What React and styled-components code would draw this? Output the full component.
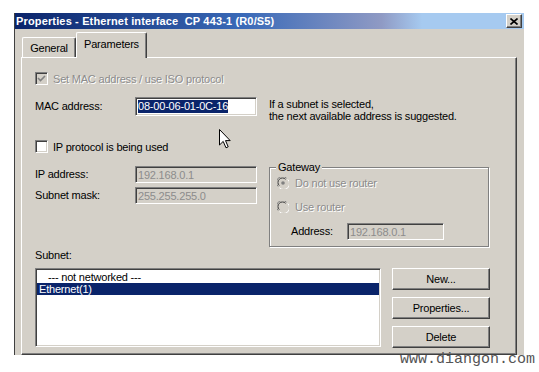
import React from "react";
import styled, { createGlobalStyle } from "styled-components";

const GlobalStyle = createGlobalStyle`
  html, body {
    margin: 0;
    padding: 0;
    background: #fff;
  }
  body {
    font-family: "Liberation Sans", Arial, sans-serif;
    font-size: 11px;
    letter-spacing: -0.2px;
    color: #000;
  }
`;

const Page = styled.div`
  position: relative;
  width: 539px;
  height: 372px;
  padding: 13px 0 0 14px;
  box-sizing: border-box;
  overflow: hidden;
`;

const Window = styled.div`
  width: 510px;
  height: 342px;
  box-sizing: border-box;
  background: #d4d0c8;
  border-left: 1px solid #404040;
  display: flex;
  flex-direction: column;
`;

const TitleBar = styled.div`
  height: 16px;
  flex-shrink: 0;
  display: flex;
  align-items: center;
  justify-content: space-between;
  padding: 0 2px 0 1px;
  background: linear-gradient(90deg, #0a246a 0%, #3a6ab8 45%, #8f9ac4 72%, #a6caf0 80%, #a6caf0 100%);
  color: #fff;
  font-weight: bold;
  font-size: 11px;
  letter-spacing: 0.15px;
  white-space: pre;
`;

const CloseButton = styled.div`
  width: 16px;
  height: 14px;
  box-sizing: border-box;
  background: #d4d0c8;
  border: 1px solid;
  border-color: #fff #404040 #404040 #fff;
  box-shadow: inset -1px -1px #808080;
  display: flex;
  align-items: center;
  justify-content: center;
`;

const Body = styled.div`
  flex: 1;
  display: flex;
  flex-direction: column;
  padding: 0 7px 0 6px;
`;

const TabStrip = styled.div`
  height: 28px;
  flex-shrink: 0;
  display: flex;
  align-items: flex-end;
  padding-left: 1px;
`;

const Tab = styled.div`
  position: relative;
  z-index: 1;
  width: ${(p) => p.width}px;
  height: ${(p) => (p.active ? 26 : 20)}px;
  margin-bottom: ${(p) => (p.active ? -1 : 0)}px;
  box-sizing: border-box;
  background: #d4d0c8;
  border: 1px solid;
  border-bottom: none;
  border-color: #fff #404040 #404040 #fff;
  border-radius: 2px 2px 0 0;
  box-shadow: inset -1px 0 #808080;
  display: flex;
  align-items: center;
  justify-content: center;
  padding-bottom: ${(p) => (p.active ? 4 : 0)}px;
`;

const Panel = styled.div`
  flex: 1;
  box-sizing: border-box;
  border: 1px solid;
  border-color: #fff #404040 #404040 #fff;
  box-shadow: inset -1px -1px #808080;
  padding: 14px 0 0 13px;
  display: flex;
  flex-direction: column;
`;

const CheckRow = styled.div`
  display: flex;
  align-items: center;
  gap: 5px;
  height: 13px;
  margin-top: ${(p) => p.top || 0}px;
  color: ${(p) => (p.disabled ? "#8c8c8c" : "#000")};
  text-shadow: ${(p) => (p.disabled ? "1px 1px 0 #fff" : "none")};
`;

const CheckBox = styled.span`
  width: 13px;
  height: 13px;
  box-sizing: border-box;
  flex-shrink: 0;
  background: ${(p) => (p.disabled ? "#d4d0c8" : "#fff")};
  border: 1px solid;
  border-color: #808080 #fff #fff #808080;
  box-shadow: inset 1px 1px #404040, inset -1px -1px #d4d0c8;
  display: flex;
  align-items: center;
  justify-content: center;
`;

const FieldRow = styled.div`
  display: flex;
  align-items: flex-start;
  margin-top: ${(p) => p.top || 0}px;
`;

const Label = styled.span`
  width: ${(p) => p.width}px;
  margin-left: ${(p) => p.indent || 0}px;
  flex-shrink: 0;
  line-height: ${(p) => p.h}px;
`;

const Input = styled.div`
  width: ${(p) => p.width}px;
  height: ${(p) => p.h}px;
  box-sizing: border-box;
  flex-shrink: 0;
  background: ${(p) => (p.disabled ? "#d4d0c8" : "#fff")};
  color: ${(p) => (p.disabled ? "#8c8c8c" : "#000")};
  border: 1px solid;
  border-color: #808080 #fff #fff #808080;
  box-shadow: inset 1px 1px #404040, inset -1px -1px #d4d0c8;
  padding-left: 2px;
  display: flex;
  align-items: center;
  white-space: nowrap;
`;

const Selected = styled.span`
  background: #0a246a;
  color: #fff;
  line-height: 13px;
`;

const Hint = styled.div`
  margin: 1px 0 0 12px;
  line-height: 12px;
`;

const IpSection = styled.div`
  display: flex;
  margin-top: 8px;
`;

const AddressColumn = styled.div`
  display: flex;
  flex-direction: column;
  gap: 4px;
  margin-top: 5px;
  width: 222px;
`;

const GroupBox = styled.div`
  position: relative;
  width: 220px;
  height: 80px;
  margin: 6px 0 0 12px;
  box-sizing: border-box;
  border: 1px solid #808080;
  box-shadow: inset 1px 1px #fff, 1px 1px #fff;
  padding: 9px 0 0 7px;
  display: flex;
  flex-direction: column;
`;

const Legend = styled.span`
  position: absolute;
  top: -7px;
  left: 6px;
  padding: 0 2px;
  background: #d4d0c8;
  line-height: 13px;
`;

const RadioRow = styled.div`
  display: flex;
  align-items: center;
  gap: 6px;
  height: 12px;
  margin-top: ${(p) => p.top || 0}px;
  color: #8c8c8c;
  text-shadow: 1px 1px 0 #fff;
`;

const SubnetLabel = styled.div`
  margin-top: 2px;
  line-height: 13px;
`;

const SubnetRow = styled.div`
  display: flex;
  align-items: flex-start;
  margin-top: 6px;
`;

const ListBox = styled.div`
  width: 346px;
  height: 79px;
  box-sizing: border-box;
  background: #fff;
  border: 1px solid;
  border-color: #808080 #fff #fff #808080;
  box-shadow: inset 1px 1px #404040, inset -1px -1px #d4d0c8;
  padding: 2px 1px;
  display: flex;
  flex-direction: column;
`;

const ListItem = styled.div`
  height: 12px;
  line-height: 12px;
  padding-left: ${(p) => p.indent}px;
  background: ${(p) => (p.selected ? "#0a246a" : "transparent")};
  color: ${(p) => (p.selected ? "#fff" : "#000")};
  white-space: nowrap;
`;

const ButtonColumn = styled.div`
  display: flex;
  flex-direction: column;
  gap: 7px;
  margin-left: 11px;
`;

const Button = styled.div`
  width: 98px;
  height: 22px;
  box-sizing: border-box;
  background: #d4d0c8;
  border: 1px solid;
  border-color: #fff #404040 #404040 #fff;
  box-shadow: inset -1px -1px #808080;
  display: flex;
  align-items: center;
  justify-content: center;
`;

const Cursor = styled.svg`
  position: absolute;
  left: 219px;
  top: 129px;
`;

const Watermark = styled.div`
  position: absolute;
  left: 400px;
  top: 352px;
  font-family: "Liberation Mono", "Courier New", monospace;
  font-size: 15px;
  line-height: 16px;
  letter-spacing: 0;
  color: #555;
`;

const Check = ({ color }) => (
  <svg width="9" height="9" viewBox="0 0 9 9">
    <polyline points="1,4 3.5,6.5 8,2" fill="none" stroke={color} strokeWidth="1.6" />
  </svg>
);

const Radio = ({ dot }) => (
  <svg width="12" height="12" viewBox="0 0 12 12">
    <circle cx="6" cy="6" r="5.5" fill="#d4d0c8" />
    <path d="M1.2 9.5 A5.5 5.5 0 0 1 9.5 1.2" fill="none" stroke="#808080" strokeWidth="1" />
    <path d="M2.3 8.6 A4.3 4.3 0 0 1 8.6 2.3" fill="none" stroke="#404040" strokeWidth="1" />
    <path d="M10.8 2.5 A5.5 5.5 0 0 1 2.5 10.8" fill="none" stroke="#fff" strokeWidth="1" />
    {dot && <circle cx="6" cy="6" r="1.8" fill="#808080" />}
  </svg>
);

export default function App() {
  return (
    <Page>
      <GlobalStyle />
      <Window>
        <TitleBar>
          <span>{"Properties - Ethernet interface  CP 443-1 (R0/S5)"}</span>
          <CloseButton>
            <svg width="8" height="7" viewBox="0 0 8 7">
              <path d="M0.5 0.5 L7.5 6.5 M7.5 0.5 L0.5 6.5" stroke="#000" strokeWidth="1.6" />
            </svg>
          </CloseButton>
        </TitleBar>
        <Body>
          <TabStrip>
            <Tab width={54}>General</Tab>
            <Tab width={71} active>Parameters</Tab>
          </TabStrip>
          <Panel>
            <CheckRow disabled>
              <CheckBox disabled>
                <Check color="#808080" />
              </CheckBox>
              Set MAC address / use ISO protocol
            </CheckRow>

            <FieldRow top={12}>
              <Label width={100} h={19}>MAC address:</Label>
              <Input width={122} h={19}>
                <Selected>08-00-06-01-0C-16</Selected>
              </Input>
              <Hint>
                If a subnet is selected,
                <br />
                the next available address is suggested.
              </Hint>
            </FieldRow>

            <CheckRow top={18}>
              <CheckBox />
              IP protocol is being used
            </CheckRow>

            <IpSection>
              <AddressColumn>
                <FieldRow>
                  <Label width={100} h={17}>IP address:</Label>
                  <Input width={122} h={17} disabled>192.168.0.1</Input>
                </FieldRow>
                <FieldRow>
                  <Label width={100} h={17}>Subnet mask:</Label>
                  <Input width={122} h={17} disabled>255.255.255.0</Input>
                </FieldRow>
              </AddressColumn>
              <GroupBox>
                <Legend>Gateway</Legend>
                <RadioRow>
                  <Radio dot />
                  Do not use router
                </RadioRow>
                <RadioRow top={12}>
                  <Radio />
                  Use router
                </RadioRow>
                <FieldRow top={10}>
                  <Label width={56} h={17} indent={14}>Address:</Label>
                  <Input width={97} h={17} disabled>192.168.0.1</Input>
                </FieldRow>
              </GroupBox>
            </IpSection>

            <SubnetLabel>Subnet:</SubnetLabel>
            <SubnetRow>
              <ListBox>
                <ListItem indent={11}>--- not networked ---</ListItem>
                <ListItem indent={2} selected>Ethernet(1)</ListItem>
              </ListBox>
              <ButtonColumn>
                <Button>New...</Button>
                <Button>Properties...</Button>
                <Button>Delete</Button>
              </ButtonColumn>
            </SubnetRow>
          </Panel>
        </Body>
      </Window>
      <Cursor width="13" height="20" viewBox="0 0 13 20">
        <path d="M0.5 0.5 L0.5 16 L4.2 12.4 L7 18.8 L9.2 17.8 L6.5 11.6 L11.2 11.6 Z" fill="#fff" stroke="#000" strokeWidth="1" />
      </Cursor>
      <Watermark>www.diangon.com</Watermark>
    </Page>
  );
}
